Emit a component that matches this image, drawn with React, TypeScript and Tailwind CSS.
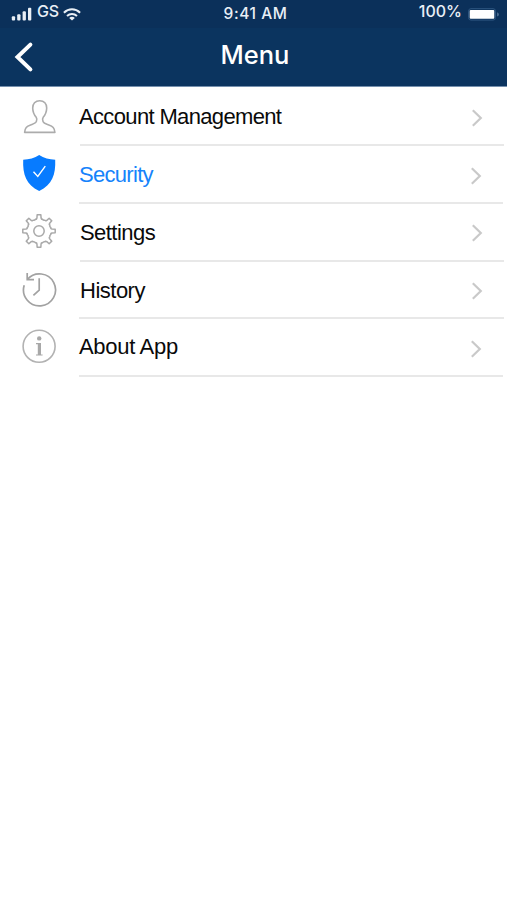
import React from "react";

type MenuItem = {
  label: string;
  icon: React.ReactNode;
  row: string;
  iconPos: string;
  text: string;
  line: string;
  chevron: string;
};

// Eight-toothed outline, rounded valleys between the teeth
function gearPath() {
  const at = (r: number, deg: number) => {
    const a = (deg * Math.PI) / 180;
    return `${(18 + r * Math.cos(a)).toFixed(2)} ${(18 + r * Math.sin(a)).toFixed(2)}`;
  };
  let d = "";
  for (let i = 0; i < 8; i++) {
    const t = i * 45;
    d += `${i === 0 ? "M" : "L"}${at(13.2, t - 9)}L${at(16.3, t - 6.5)}L${at(16.3, t + 6.5)}L${at(13.2, t + 9)}`;
    d += `Q${at(11.6, t + 12)} ${at(12.4, t + 16)}Q${at(11.2, t + 22.5)} ${at(12.4, t + 29)}Q${at(11.6, t + 33)} ${at(13.2, t + 36)}`;
  }
  return d + "Z";
}

function UserIcon() {
  return (
    <svg width="36" height="36" viewBox="0 0 36 36" fill="none" stroke="#acacac" strokeWidth="1.6" strokeLinejoin="round">
      <path d="M18.7 1.7C14.3 1.7 11.6 4.8 11.7 9C11.8 13.3 13 15.8 15.2 18.2C15.8 19 15.8 21.5 15.3 22.8C14.7 24.4 12.4 24.9 9.6 25.9C5.6 27.3 4 28.7 3.6 33.4H33.9C33.5 28.7 31.8 27.3 27.8 25.9C25 24.9 22.7 24.4 22.1 22.8C21.6 21.5 21.6 19 22.2 18.2C24.4 15.8 25.6 13.3 25.7 9C25.8 4.8 23.1 1.7 18.7 1.7Z" />
    </svg>
  );
}

function ShieldIcon() {
  return (
    <svg width="36" height="38" viewBox="0 0 36 38" fill="none">
      <path d="M18.2 1C13.6 4.2 8.2 5.5 2.2 5.7C1.6 20.5 5.2 30.6 18.2 37C31.2 30.6 34.8 20.5 34.2 5.7C28.2 5.5 22.8 4.2 18.2 1Z" fill="#077bff" />
      <path d="M12.5 17.8L16.8 22.4L24.3 12.1" stroke="#fff" strokeWidth="1.4" />
    </svg>
  );
}

function GearIcon() {
  return (
    <svg width="36" height="36" viewBox="0 0 36 36" fill="none" stroke="#a9a9a9" strokeWidth="1.5" strokeLinejoin="round">
      <path d={gearPath()} />
      <circle cx="18" cy="18" r="5.2" />
    </svg>
  );
}

function HistoryIcon() {
  return (
    <svg width="36" height="38" viewBox="0 0 36 38" fill="none" stroke="#a2a2a2" strokeWidth="1.7">
      <path d="M3.2 14.2A16 16 0 1 0 6.4 8.4" />
      <path d="M6.2 1.9V8.7H13" />
      <path d="M18.2 7.3V19.1L12.4 24.4" />
    </svg>
  );
}

function InfoIcon() {
  return (
    <svg width="36" height="36" viewBox="0 0 36 36" fill="none">
      <circle cx="18.1" cy="18.3" r="16" stroke="#b2b2b2" strokeWidth="1.6" />
      <circle cx="18.2" cy="10.4" r="2.2" fill="#a8a8a8" />
      <path d="M15 15H20V26.4H21.6V27.6H15V26.4H16.8V16.2H15Z" fill="#a8a8a8" />
    </svg>
  );
}

function SignalIcon() {
  return (
    <svg width="21" height="14" viewBox="0 0 21 14" fill="#e9eff6">
      <rect x="0.8" y="9.2" width="3.3" height="4.2" rx="1" />
      <rect x="6.2" y="7.2" width="3.3" height="6.2" rx="1" />
      <rect x="11.6" y="4.2" width="3.3" height="9.2" rx="1" />
      <rect x="17" y="0.8" width="3.3" height="12.6" rx="1" />
    </svg>
  );
}

function WifiIcon() {
  return (
    <svg width="18" height="13" viewBox="0 0 18 13" fill="none" stroke="#e9eff6" strokeWidth="2">
      <path d="M0.9 4.8C5.6 0.2 12.4 0.2 17.1 4.8" />
      <path d="M4 7.9C6.9 5.2 11.1 5.2 14 7.9" />
      <path d="M9 12.6L6.2 9.9C7.8 8.5 10.2 8.5 11.8 9.9Z" fill="#e9eff6" stroke="none" />
    </svg>
  );
}

function BatteryIcon() {
  return (
    <svg width="32" height="13" viewBox="0 0 32 13" fill="none">
      <rect x="0.5" y="0.7" width="27" height="11.4" rx="2.5" stroke="#2d5580" />
      <rect x="1.7" y="2" width="24.6" height="8.8" rx="1" fill="#fff" />
      <path d="M29.3 4.2C31.2 5 31.2 7.8 29.3 8.6Z" fill="#6583a5" />
    </svg>
  );
}

const items: MenuItem[] = [
  { label: "Account Management", icon: <UserIcon />, row: "h-[59px]", iconPos: "pt-[12px]", text: "pt-[17px] tracking-[-0.65px] text-[#0a0a0a]", line: "ml-px mr-[3px]", chevron: "mt-[22px] mr-[24px]" },
  { label: "Security", icon: <ShieldIcon />, row: "h-[58px]", iconPos: "pt-[8px]", text: "pt-[16px] tracking-[-0.7px] text-[#1683fb]", line: "mr-[4px]", chevron: "mt-[21px] mr-[25px]" },
  { label: "Settings", icon: <GearIcon />, row: "h-[58px]", iconPos: "pt-[9px]", text: "pt-[16px] pl-px tracking-[-0.55px] text-[#0a0a0a]", line: "ml-px mr-[3px]", chevron: "mt-[20px] mr-[24px]" },
  { label: "History", icon: <HistoryIcon />, row: "h-[57px]", iconPos: "pt-[9px]", text: "pt-[16px] pl-px tracking-[-0.5px] text-[#0a0a0a]", line: "mr-[3px]", chevron: "mt-[20px] mr-[24px]" },
  { label: "About App", icon: <InfoIcon />, row: "h-[58px]", iconPos: "pt-[9px]", text: "pt-[15px] tracking-[-0.3px] text-[#0a0a0a]", line: "mr-[4px]", chevron: "mt-[21px] mr-[25px]" },
];

export default function App() {
  return (
    <div className="h-[900px] w-[507px] overflow-hidden bg-white font-['Liberation_Sans',Arial,sans-serif]">
      <header className="h-[87px] border-b border-[#7590ae] bg-[#0b345f] text-white">
        {/* Status bar */}
        <div className="grid h-[28px] grid-cols-3 bg-[#0b305a] font-[Inter,sans-serif] text-[#e9eff6]">
          <div className="flex items-start pl-[11px]">
            <div className="pt-[7px]"><SignalIcon /></div>
            <span className="ml-[5px] pt-[2px] text-[16px] leading-[18px] font-medium tracking-[-0.3px]">GS</span>
            <div className="ml-[4px] pt-[8px]"><WifiIcon /></div>
          </div>
          <div className="pt-[5px] pl-[4px] text-center text-[15.5px] leading-[18px] font-medium tracking-[0.55px]">9:41 AM</div>
          <div className="flex items-start justify-end pr-[7px]">
            <span className="mr-[6px] pt-[2px] text-[16px] leading-[18px] font-medium">100%</span>
            <div className="pt-[8px]"><BatteryIcon /></div>
          </div>
        </div>

        {/* Title */}
        <div className="grid h-[58px] grid-cols-3">
          <svg className="mt-[13px] ml-[13px]" width="22" height="32" viewBox="0 0 22 32" fill="none" stroke="#fff" strokeWidth="4">
            <path d="M17.4 3.6L4.5 16L17.4 28.4" strokeLinecap="round" />
          </svg>
          <h1 className="pt-[11px] pl-[3px] text-center font-[Inter,sans-serif] text-[25.5px] leading-[32px] font-medium">Menu</h1>
        </div>
      </header>

      <nav>
        {items.map((item) => (
          <a key={item.label} className={`flex ${item.row}`}>
            <div className={`w-[79px] shrink-0 pl-[21px] ${item.iconPos}`}>{item.icon}</div>
            <div className="flex flex-1 flex-col">
              <div className="flex flex-1 items-start justify-between">
                <span className={`text-[22px] leading-[25px] ${item.text}`}>{item.label}</span>
                <svg className={item.chevron} width="12" height="18" viewBox="0 0 12 18" fill="none" stroke="#c9c9c9" strokeWidth="2.2">
                  <path d="M1.8 1.3L9.8 9L1.8 16.7" />
                </svg>
              </div>
              <div className={`h-[2px] bg-[#e8e8e8] ${item.line}`} />
            </div>
          </a>
        ))}
      </nav>
    </div>
  );
}
